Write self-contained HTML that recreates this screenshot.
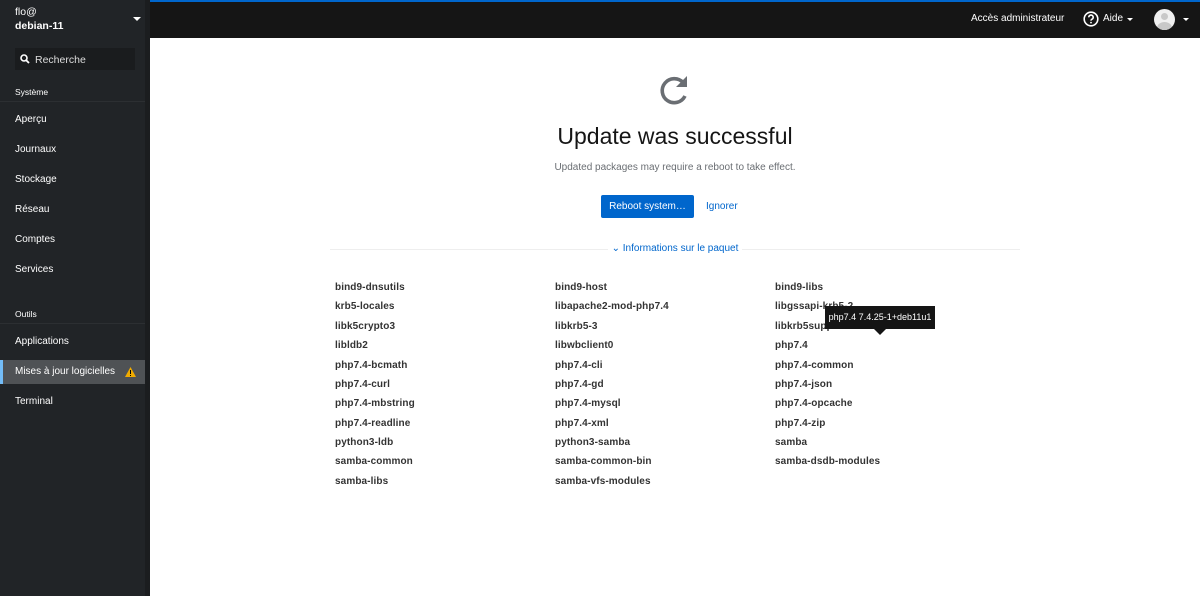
<!DOCTYPE html>
<html><head><meta charset="utf-8"><style>
*{margin:0;padding:0;box-sizing:border-box}
body{width:1200px;height:596px;overflow:hidden;font-family:"Liberation Sans",sans-serif;background:#fff;position:relative}
#side{position:absolute;left:0;top:0;width:145px;height:596px;background:#212427;color:#fff}
#stripe{position:absolute;left:145px;top:0;width:5px;height:596px;background:#1b1d1f}
#top{position:absolute;left:150px;top:0;width:1050px;height:38px;background:#151515;border-top:2px solid #0066cc}
.abs{position:absolute;white-space:nowrap}
.nav{position:absolute;left:15px;font-size:10px;color:#fff}
.sec{position:absolute;left:15px;font-size:8.5px;color:#fff}
.pk{position:absolute;font-size:10px;font-weight:bold;color:#333;letter-spacing:.1px}
</style></head><body>
<div id="side">
<div class="abs" style="left:15px;top:6px;font-size:10.5px">flo@</div>
<div class="abs" style="left:15px;top:20px;font-size:10.5px;font-weight:bold">debian-11</div>
<div class="abs" style="left:133px;top:17px;width:0;height:0;border-left:4px solid transparent;border-right:4px solid transparent;border-top:4px solid #fff"></div>
<div class="abs" style="left:15px;top:48px;width:120px;height:22px;background:#1a1c1e"></div>
<svg class="abs" style="left:20px;top:54px" width="10" height="10" viewBox="0 0 10 10"><circle cx="4" cy="4" r="3" fill="none" stroke="#fff" stroke-width="1.6"/><path d="M6.2 6.2L9 9" stroke="#fff" stroke-width="1.8"/></svg>
<div class="abs" style="left:35px;top:54px;font-size:10.5px;color:#ddd">Recherche</div>
<div class="sec" style="top:87px">Système</div>
<div class="abs" style="left:0;top:101px;width:145px;height:1px;background:#2c2f32"></div>
<div class="nav" style="top:114px">Aperçu</div>
<div class="nav" style="top:144px">Journaux</div>
<div class="nav" style="top:174px">Stockage</div>
<div class="nav" style="top:204px">Réseau</div>
<div class="nav" style="top:234px">Comptes</div>
<div class="nav" style="top:264px">Services</div>
<div class="sec" style="top:309px">Outils</div>
<div class="abs" style="left:0;top:323px;width:145px;height:1px;background:#2c2f32"></div>
<div class="nav" style="top:336px">Applications</div>
<div class="abs" style="left:0;top:360px;width:145px;height:24px;background:#4f5255"></div>
<div class="abs" style="left:0;top:360px;width:3px;height:24px;background:#73bcf7"></div>
<div class="nav" style="top:366px">Mises à jour logicielles</div>
<svg class="abs" style="left:125px;top:367px" width="11" height="10" viewBox="0 0 11 10"><path d="M5.5 0L11 10H0Z" fill="#f0ab00"/><rect x="5" y="3" width="1" height="4" fill="#000"/><rect x="5" y="8" width="1" height="1" fill="#000"/></svg>
<div class="nav" style="top:396px">Terminal</div>
</div>
<div id="stripe"></div>
<div id="top">
<div class="abs" style="left:821px;top:11px;font-size:10px;color:#fff">Accès administrateur</div>
<svg class="abs" style="left:933px;top:9px" width="16" height="16" viewBox="0 0 16 16"><circle cx="8" cy="8" r="6.8" fill="none" stroke="#fff" stroke-width="1.6"/><path d="M5.8 6.3a2.2 2.2 0 1 1 3 2c-.6.3-.8.6-.8 1.3" fill="none" stroke="#fff" stroke-width="1.6"/><circle cx="8" cy="11.6" r=".9" fill="#fff"/></svg>
<div class="abs" style="left:953px;top:11px;font-size:10px;color:#fff">Aide</div>
<div class="abs" style="left:977px;top:16px;border-left:3.5px solid transparent;border-right:3.5px solid transparent;border-top:3.5px solid #fff"></div>
<div class="abs" style="left:1004px;top:7px;width:21px;height:21px;border-radius:50%;background:#f0f0f0;overflow:hidden"><div style="position:absolute;left:7px;top:4px;width:7px;height:7px;border-radius:50%;background:#c8c8c8"></div><div style="position:absolute;left:3px;top:13px;width:15px;height:12px;border-radius:50%;background:#c8c8c8"></div></div>
<div class="abs" style="left:1033px;top:16px;border-left:3.5px solid transparent;border-right:3.5px solid transparent;border-top:3.5px solid #fff"></div>
</div>
<svg class="abs" style="left:656px;top:72px" width="36" height="36" viewBox="0 0 36 36"><path d="M27 10.5A12 12 0 1 0 29 24" fill="none" stroke="#6a6e73" stroke-width="3.6"/><path d="M31 4V15H20Z" fill="#6a6e73"/></svg>
<div class="abs" style="left:0;width:1350px;text-align:center;top:123px;font-size:23px;color:#151515">Update was successful</div>
<div class="abs" style="left:0;width:1350px;text-align:center;top:162px;font-size:10px;color:#6a6e73">Updated packages may require a reboot to take effect.</div>
<div class="abs" style="left:601px;top:195px;width:93px;height:23px;background:#0066cc;border-radius:2px;color:#fff;font-size:10px;text-align:center;line-height:23px">Reboot system…</div>
<div class="abs" style="left:706px;top:201px;font-size:10px;color:#0066cc">Ignorer</div>
<div class="abs" style="left:330px;top:249px;width:690px;height:1px;background:#eee"></div>
<div class="abs" style="left:0;width:1350px;text-align:center;top:243px;font-size:10px;color:#0066cc"><span style="background:#fff;padding:0 4px">⌄ Informations sur le paquet</span></div>
<div class="pk" style="left:335px;top:282px">bind9-dnsutils</div><div class="pk" style="left:555px;top:282px">bind9-host</div><div class="pk" style="left:775px;top:282px">bind9-libs</div>
<div class="pk" style="left:335px;top:301px">krb5-locales</div><div class="pk" style="left:555px;top:301px">libapache2-mod-php7.4</div><div class="pk" style="left:775px;top:301px">libgssapi-krb5-2</div>
<div class="pk" style="left:335px;top:321px">libk5crypto3</div><div class="pk" style="left:555px;top:321px">libkrb5-3</div><div class="pk" style="left:775px;top:321px">libkrb5support0</div>
<div class="pk" style="left:335px;top:340px">libldb2</div><div class="pk" style="left:555px;top:340px">libwbclient0</div><div class="pk" style="left:775px;top:340px">php7.4</div>
<div class="pk" style="left:335px;top:360px">php7.4-bcmath</div><div class="pk" style="left:555px;top:360px">php7.4-cli</div><div class="pk" style="left:775px;top:360px">php7.4-common</div>
<div class="pk" style="left:335px;top:379px">php7.4-curl</div><div class="pk" style="left:555px;top:379px">php7.4-gd</div><div class="pk" style="left:775px;top:379px">php7.4-json</div>
<div class="pk" style="left:335px;top:398px">php7.4-mbstring</div><div class="pk" style="left:555px;top:398px">php7.4-mysql</div><div class="pk" style="left:775px;top:398px">php7.4-opcache</div>
<div class="pk" style="left:335px;top:418px">php7.4-readline</div><div class="pk" style="left:555px;top:418px">php7.4-xml</div><div class="pk" style="left:775px;top:418px">php7.4-zip</div>
<div class="pk" style="left:335px;top:437px">python3-ldb</div><div class="pk" style="left:555px;top:437px">python3-samba</div><div class="pk" style="left:775px;top:437px">samba</div>
<div class="pk" style="left:335px;top:456px">samba-common</div><div class="pk" style="left:555px;top:456px">samba-common-bin</div><div class="pk" style="left:775px;top:456px">samba-dsdb-modules</div>
<div class="pk" style="left:335px;top:476px">samba-libs</div><div class="pk" style="left:555px;top:476px">samba-vfs-modules</div>
<div class="abs" style="left:825px;top:306px;width:110px;height:23px;background:#151515;color:#fff;font-size:9px;line-height:23px;text-align:center">php7.4 7.4.25-1+deb11u1</div>
<div class="abs" style="left:874px;top:329px;border-left:6px solid transparent;border-right:6px solid transparent;border-top:6px solid #151515"></div>
</body></html>
